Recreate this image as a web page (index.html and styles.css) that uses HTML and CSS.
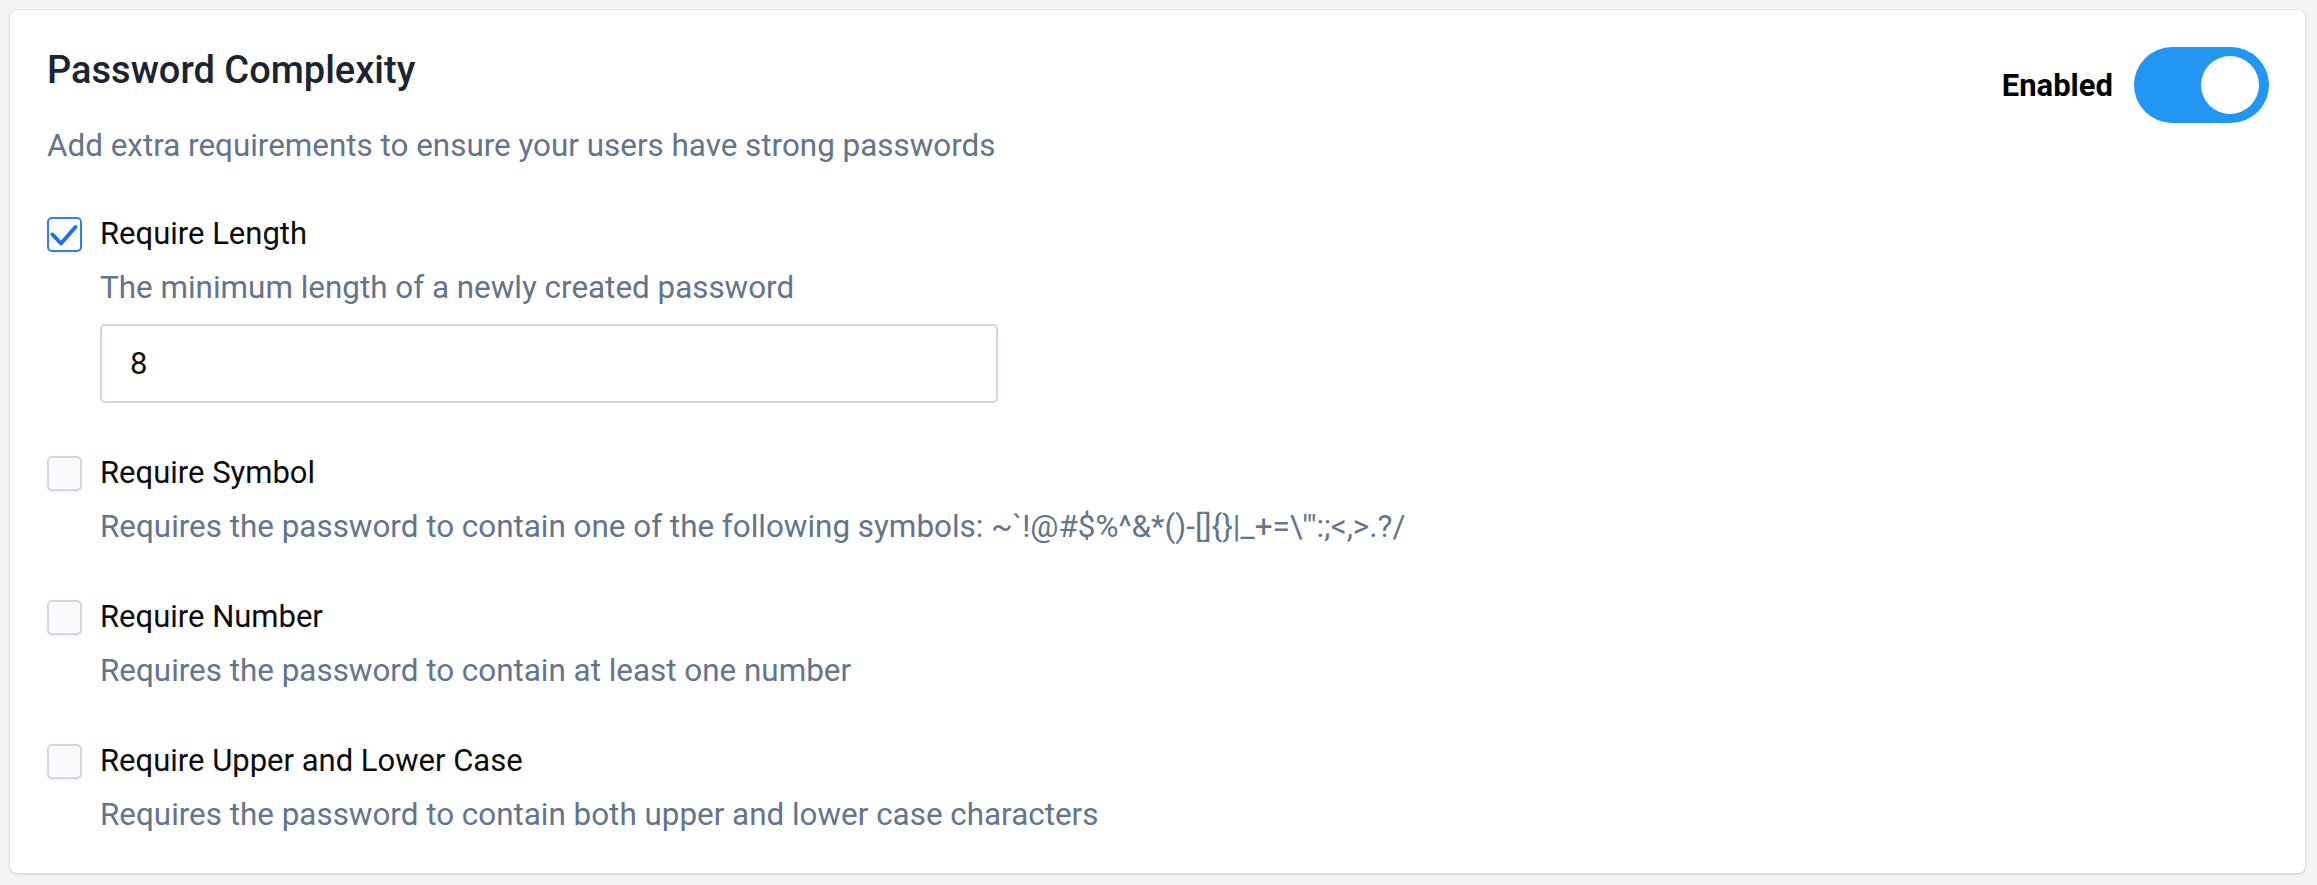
FILE: index.html
```html
<!DOCTYPE html>
<html lang="en">
<head>
<meta charset="utf-8">
<title>Password Complexity</title>
<link rel="stylesheet" href="styles.css">
</head>
<body>
<section class="card">
  <header class="card-header">
    <div class="heading">
      <h2 class="title">Password Complexity</h2>
      <p class="subtitle">Add extra requirements to ensure your users have strong passwords</p>
    </div>
    <div class="switch-group">
      <span class="switch-label">Enabled</span>
      <span class="switch on"><span class="knob"></span></span>
    </div>
  </header>

  <div class="options">
    <div class="option">
      <label class="option-row">
        <span class="checkbox checked">
          <svg viewBox="0 0 35 35" width="35" height="35"><path d="M5.5 17.5 L14 26.5 L28.5 10" fill="none" stroke="#1f6fe5" stroke-width="4" stroke-linecap="round" stroke-linejoin="round"/></svg>
        </span>
        <span class="option-label">Require Length</span>
      </label>
      <p class="option-desc">The minimum length of a newly created password</p>
      <div class="field">8</div>
    </div>

    <div class="option">
      <label class="option-row">
        <span class="checkbox"></span>
        <span class="option-label">Require Symbol</span>
      </label>
      <p class="option-desc">Requires the password to contain one of the following symbols: ~`!@#$%^&amp;*()-[]{}|_+=\'":;&lt;,&gt;.?/</p>
    </div>

    <div class="option">
      <label class="option-row">
        <span class="checkbox"></span>
        <span class="option-label">Require Number</span>
      </label>
      <p class="option-desc">Requires the password to contain at least one number</p>
    </div>

    <div class="option">
      <label class="option-row">
        <span class="checkbox"></span>
        <span class="option-label">Require Upper and Lower Case</span>
      </label>
      <p class="option-desc">Requires the password to contain both upper and lower case characters</p>
    </div>
  </div>
</section>
</body>
</html>
```

FILE: styles.css
```css
* { box-sizing: border-box; }

html, body {
  background: #f3f4f6;
}

body {
  margin: 0;
  padding: 10px 12px 12px 10px;
  font-family: Roboto, "Liberation Sans", Arial, sans-serif;
}

.card {
  background: #ffffff;
  border-radius: 7px;
  box-shadow: 0 1px 3px rgba(15, 23, 42, 0.16), 0 0 0 1px rgba(15, 23, 42, 0.04);
  padding: 37px 36px 41px 37px;
  height: 863px;
}

.card-header {
  display: flex;
  justify-content: space-between;
  align-items: flex-start;
}

.title {
  margin: 0;
  font-size: 38px;
  line-height: 46px;
  font-weight: 500;
  color: #1b2430;
}

.subtitle {
  margin: 33px 0 0 0;
  font-size: 31.4px;
  line-height: 40px;
  color: #64748b;
}

.switch-group {
  display: flex;
  align-items: center;
  gap: 21px;
}

.switch-label {
  font-size: 31px;
  font-weight: 700;
  color: #000;
}

.switch {
  display: flex;
  align-items: center;
  width: 135px;
  height: 76px;
  border-radius: 38px;
  background: #2196f3;
  padding: 0 10px;
}

.switch.on { justify-content: flex-end; }

.knob {
  width: 58px;
  height: 58px;
  border-radius: 50%;
  background: #fff;
}

.options {
  margin-top: 48px;
  display: flex;
  flex-direction: column;
  gap: 50px;
}

.option-row {
  display: flex;
  align-items: center;
  gap: 18px;
  height: 40px;
}

.checkbox {
  flex: none;
  width: 35px;
  height: 35px;
  border: 2px solid #cfd8e3;
  border-radius: 5px;
  background: #f8fafc;
  box-shadow: 0 2px 2px rgba(15, 23, 42, 0.06);
  display: flex;
  align-items: center;
  justify-content: center;
}

.checkbox svg { display: block; margin: -2px; }

.checkbox.checked {
  border-color: #2f7fe8;
  background: #fff;
}

.option-label {
  font-size: 31px;
  line-height: 40px;
  color: #0b0b0b;
}

.option-desc {
  margin: 14px 0 0 53px;
  font-size: 31.4px;
  line-height: 40px;
  color: #64748b;
}

.field {
  margin: 16px 0 0 53px;
  width: 898px;
  height: 79px;
  border: 2px solid #cfd8e1;
  border-radius: 5px;
  padding: 0 28px;
  display: flex;
  align-items: center;
  font-size: 31px;
  color: #111;
}
```
